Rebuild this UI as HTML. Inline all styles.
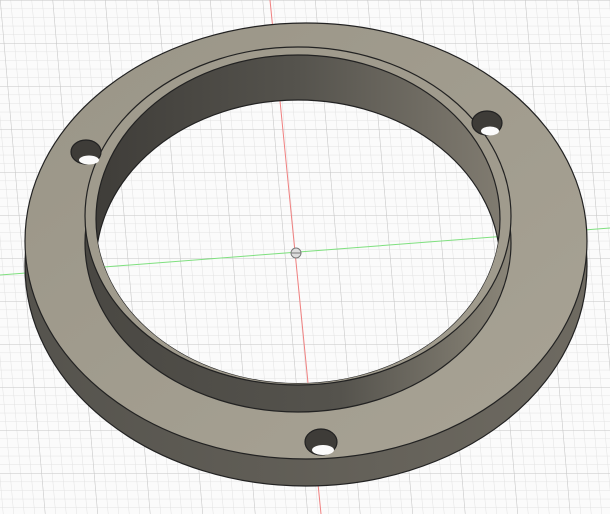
<!DOCTYPE html>
<html><head><style>html,body{margin:0;padding:0;background:#fbfbfb;}svg{display:block}</style></head>
<body>
<svg width="610" height="514" viewBox="0 0 610 514" xmlns="http://www.w3.org/2000/svg">
<defs>
<pattern id="minor" width="10.5" height="8.6" patternUnits="userSpaceOnUse" patternTransform="skewX(5)">
<path d="M0 0H10.5M0 0V8.6" stroke="#e2e2e2" stroke-width="1" fill="none"/>
</pattern>
<pattern id="major" width="52.5" height="43" patternUnits="userSpaceOnUse" patternTransform="skewX(5)">
<path d="M0 0H52.5M0 0V43" stroke="#c6c6c6" stroke-width="1" fill="none"/>
</pattern>
<linearGradient id="wall" x1="0" x2="1" y1="0" y2="0">
<stop offset="0" stop-color="#3f3d39"/><stop offset="0.5" stop-color="#55534d"/><stop offset="1" stop-color="#807b70"/>
</linearGradient>
<linearGradient id="lipside" x1="0" x2="1" y1="0" y2="0">
<stop offset="0" stop-color="#4a4843"/><stop offset="0.6" stop-color="#55534d"/><stop offset="1" stop-color="#8a8578"/>
</linearGradient>
<linearGradient id="outside" x1="0" x2="1" y1="0" y2="0">
<stop offset="0" stop-color="#55534d"/><stop offset="1" stop-color="#6e6a61"/>
</linearGradient>
<linearGradient id="face" x1="0" x2="1" y1="0" y2="1">
<stop offset="0" stop-color="#9a9587"/><stop offset="1" stop-color="#a8a395"/>
</linearGradient>
<clipPath id="inner"><ellipse cx="298" cy="219" rx="202" ry="164"/></clipPath>
<clipPath id="hole"><ellipse cx="298" cy="264" rx="202" ry="164"/></clipPath>
<g id="bg">
<rect width="610" height="514" fill="#fbfbfb"/>
<rect width="610" height="514" fill="url(#minor)"/>
<rect width="610" height="514" fill="url(#major)"/>
<line x1="270" y1="0" x2="321" y2="514" stroke="#f08080" stroke-width="1"/>
<line x1="0" y1="275" x2="610" y2="228" stroke="#7fe07f" stroke-width="1"/>
</g>
</defs>
<use href="#bg"/>
<ellipse cx="306" cy="266" rx="281" ry="220" fill="url(#outside)" stroke="#222" stroke-width="1.2"/>
<ellipse cx="306" cy="241" rx="281" ry="218" fill="url(#face)" stroke="#222" stroke-width="1.2"/>
<ellipse cx="298" cy="243" rx="213" ry="169" fill="url(#lipside)" stroke="#222" stroke-width="1.2"/>
<ellipse cx="298" cy="216" rx="213" ry="169" fill="#a09b8d" stroke="#222" stroke-width="1.2"/>
<ellipse cx="298" cy="219" rx="202" ry="164" fill="url(#wall)" stroke="#222" stroke-width="1.2"/>
<g clip-path="url(#inner)">
<g clip-path="url(#hole)"><use href="#bg"/></g>
<ellipse cx="298" cy="264" rx="202" ry="164" fill="none" stroke="#222" stroke-width="1.2"/>
</g>
<circle cx="296" cy="253" r="5" fill="#ddd" stroke="#777" stroke-width="1"/>
<path d="M291 253h10" stroke="#777" stroke-width="1"/>
<g stroke="#222" stroke-width="1.2">
<ellipse cx="86" cy="152" rx="15" ry="12" fill="#3e3c38"/>
<ellipse cx="487" cy="123" rx="15" ry="12" fill="#3e3c38"/>
<ellipse cx="321" cy="442" rx="16" ry="13" fill="#3e3c38"/>
</g>
<ellipse cx="89" cy="160" rx="10" ry="4.5" fill="#fbfbfb"/>
<ellipse cx="490" cy="131" rx="9" ry="4.5" fill="#fbfbfb"/>
<ellipse cx="323" cy="450" rx="11" ry="5" fill="#fbfbfb"/>
</svg>
</body></html>
